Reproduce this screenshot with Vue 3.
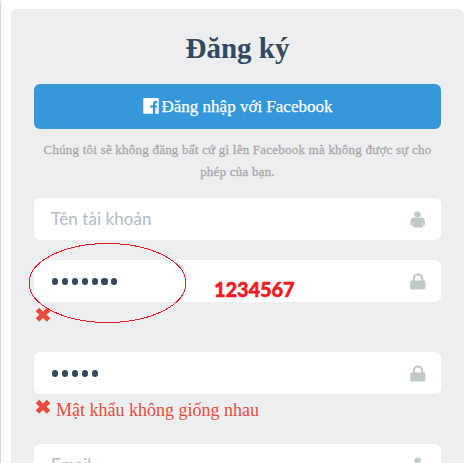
<script setup>
const fields = [
  { id: 'name', placeholder: 'Tên tài khoản', icon: 'user' },
  { id: 'password', dots: 7, icon: 'lock', invalid: true },
  { id: 'confirm', dots: 5, icon: 'lock', invalid: true, message: 'Mật khẩu không giống nhau' },
  { id: 'email', placeholder: 'Email', icon: 'user' }
]
</script>

<template>
  <div class="page">
    <main class="panel">
      <h1><span>Đăng ký</span></h1>
      <button class="facebook" type="button">
        <svg class="fb" width="16" height="16" viewBox="0 0 16 16">
          <path fill="#fff" d="M1 0h14q.7 0 .7.700v14.300q0 .700-.700.700h-2.700V9.500h2V7.400h-2V6.200q0-1 1-1h1V3.100h-1.800q-2.600 0-2.600 2.600v1.700H7v2.100h2.900v6.200H1q-.7 0-.7-.7V.7Q.3 0 1 0z" />
        </svg>
        <span class="fb-text">Đăng nhập với Facebook</span>
      </button>
      <p class="note"><span class="line-one">Chúng tôi sẽ không đăng bất cứ gì lên Facebook mà không được sự cho</span><br><span class="line-two">phép của bạn.</span></p>

      <div v-for="field in fields" :key="field.id" class="group" :class="{ invalid: field.invalid }">
        <div class="field">
          <span v-if="field.placeholder" class="placeholder" :class="field.id">{{ field.placeholder }}</span>
          <span v-else class="dots"><i v-for="n in field.dots" :key="n" /></span>
          <svg v-if="field.icon === 'user'" class="icon" width="16" height="17" viewBox="0 0 16 17">
            <ellipse cx="7.500" cy="3.300" rx="3.300" ry="2.900" />
            <path d="M4.500 6.500h6Q14.900 6.500 14.900 10.500v4.300h-2v1.700H3v-1.700H.5v-4.300Q.5 6.500 4.500 6.500z" />
            <path class="arm" d="M3 11.500v3.300M12.500 11.500v3.300" />
          </svg>
          <svg v-else class="icon" width="16" height="17" viewBox="0 0 16 17">
            <path d="M1.200 7.500H2.800V5.500a5.200 5 0 0 1 10.400 0v2h1.300q.9 0 .9.900v7.200q0 .900-.900.900H1.200q-.9 0-.9-.9V8.400q0-.9.900-.9zM5 7.500h6V5.500a3 3 0 0 0-6 0z" />
          </svg>
        </div>
        <div v-if="field.invalid" class="error">
          <svg width="16" height="16" viewBox="0 0 16 16">
            <path d="M4.200.700 8 4.400 11.800.700 15.300 4.200 11.600 7.700 15.300 11.300 11.800 14.800 8 11.100 4.200 14.800.700 11.300 4.400 7.700.700 4.200z" />
          </svg>
          <span v-if="field.message">{{ field.message }}</span>
        </div>
        <template v-if="field.id === 'password'">
          <svg class="circle" width="160" height="82" viewBox="0 0 160 82">
            <ellipse cx="79.500" cy="41" rx="78.500" ry="39.500" />
          </svg>
          <span class="hint">1234567</span>
        </template>
      </div>
    </main>
  </div>
</template>

<style>
body { background: #fff; overflow: hidden; }
</style>

<style scoped>
.page {
  box-sizing: border-box;
  width: 474px;
  height: 463px;
  overflow: hidden;
  padding: 9px 10px 0;
  border-left: 1px solid #d5d8dd;
  border-top-left-radius: 3px;
}
.panel {
  box-sizing: border-box;
  width: 453px;
  height: 520px;
  padding: 19px 23px 0;
  border-radius: 6px;
  background: #edeef0;
}
h1 {
  margin: 0;
  height: 56px;
  color: #34495e;
  font: bold 29px/40px "Liberation Serif", serif;
  text-align: center;
}
.facebook {
  display: flex;
  align-items: center;
  justify-content: center;
  gap: 3px;
  width: 407px;
  height: 45px;
  padding: 0;
  border: 0;
  border-radius: 6px;
  background: #3498db;
  color: #fff;
  font: 17px/24px "Liberation Serif", serif;
  -webkit-text-stroke: .25px #fff;
}
.fb { margin-top: -2px; }
.note {
  height: 44px;
  margin: 10px 0 15px;
  color: #aaa;
  font: 13px/22px "Liberation Serif", serif;
  letter-spacing: .22px;
  text-align: center;
  white-space: nowrap;
  -webkit-text-stroke: .3px #aaa;
}
.group { position: relative; height: 62px; }
.group.invalid { height: 92px; }
.field {
  box-sizing: border-box;
  display: flex;
  align-items: center;
  justify-content: space-between;
  width: 407px;
  height: 42px;
  padding: 0 15px 0 17px;
  border-radius: 6px;
  background: #fff;
}
.placeholder { color: #b2bcc5; font: 17px/24px Lato, sans-serif; letter-spacing: .07px; }
.dots { display: flex; gap: 3.700px; padding: 1px 0 0 1px; }
.dots i { width: 6.200px; height: 6.200px; border-radius: 50%; background: #34495e; }
.icon { fill: #bfc9ca; }
.arm { stroke: #fff; stroke-width: .6; fill: none; }
.error {
  display: flex;
  gap: 5px;
  padding: 5px 0 0 1px;
  color: #e74c3c;
  font: 18px/22px "Liberation Serif", serif;
}
.error svg { fill: #e74c3c; }
.circle { position: absolute; left: -6px; top: -18px; fill: none; stroke: #ed1c24; stroke-width: 1; shape-rendering: crispEdges; }
.hint {
  position: absolute;
  left: 180px;
  top: 16px;
  color: #ed1c24;
  font: 900 20px/26px Lato, sans-serif;
  letter-spacing: -.1px;
  -webkit-text-stroke: .5px #ed1c24;
}
</style>
